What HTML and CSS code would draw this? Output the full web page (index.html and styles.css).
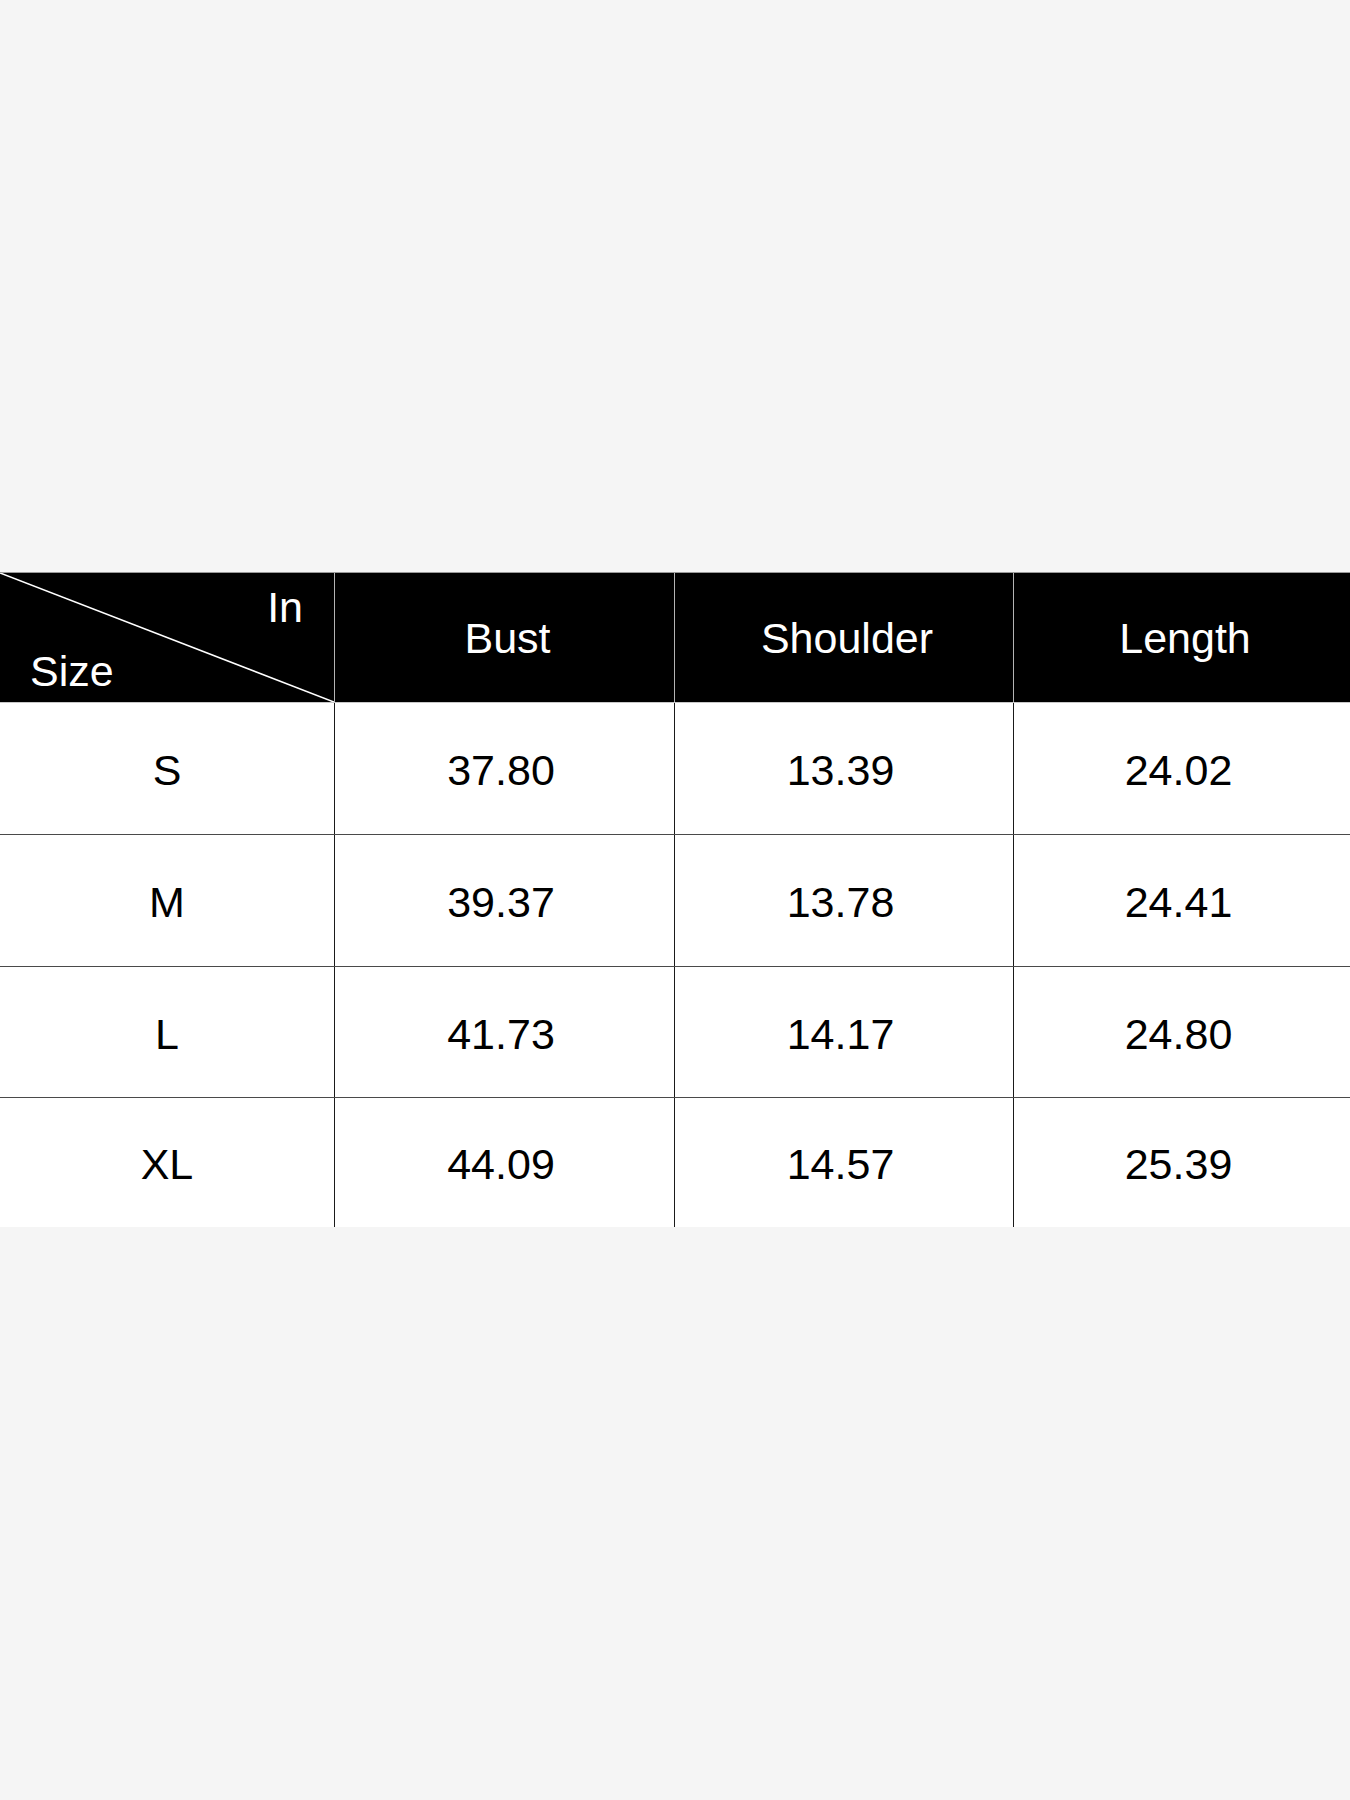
FILE: index.html
```html
<!DOCTYPE html>
<html>
<head>
<meta charset="utf-8">
<link rel="stylesheet" href="styles.css">
</head>
<body>
<div class="page">
  <div class="chart">
    <div class="row head">
      <div class="cell corner">
        <svg class="diag" viewBox="0 0 100 100" preserveAspectRatio="none"><line x1="0" y1="0" x2="100" y2="100" stroke="#fff" stroke-width="1.6" vector-effect="non-scaling-stroke"/></svg>
        <span class="in">In</span>
        <span class="size">Size</span>
      </div>
      <div class="cell">Bust</div>
      <div class="cell">Shoulder</div>
      <div class="cell">Length</div>
    </div>
    <div class="row body">
      <div class="cell">S</div><div class="cell">37.80</div><div class="cell">13.39</div><div class="cell">24.02</div>
    </div>
    <div class="row body">
      <div class="cell">M</div><div class="cell">39.37</div><div class="cell">13.78</div><div class="cell">24.41</div>
    </div>
    <div class="row body">
      <div class="cell">L</div><div class="cell">41.73</div><div class="cell">14.17</div><div class="cell">24.80</div>
    </div>
    <div class="row body">
      <div class="cell">XL</div><div class="cell">44.09</div><div class="cell">14.57</div><div class="cell">25.39</div>
    </div>
  </div>
</div>
</body>
</html>
```
FILE: styles.css
```css
html, body {
  margin: 0;
  padding: 0;
  background: #f5f5f5;
}
.page {
  width: 1350px;
  height: 1800px;
  padding-top: 572px;
  box-sizing: border-box;
  font-family: "Liberation Sans", Arial, sans-serif;
  font-size: 43px;
}
.chart {
  width: 1350px;
}
.row {
  display: grid;
  grid-template-columns: 335px 340px 339px 336px;
}
.cell {
  display: flex;
  align-items: center;
  justify-content: center;
  line-height: 1;
  box-sizing: border-box;
}
.head {
  height: 131px;
  background: #000;
  color: #fff;
  border-top: 1px solid #9a9a9a;
  border-bottom: 1px solid #c8c8c8;
  box-sizing: border-box;
}
.head .cell {
  border-right: 1px solid #b4b4b4;
}
.head .cell:last-child {
  border-right: none;
}
.head .cell:not(.corner) {
  padding-top: 2px;
  padding-left: 6px;
}
.corner {
  position: relative;
  flex-direction: column;
  align-items: stretch;
  justify-content: space-between;
  padding: 13px 31px 9px 30px;
}
.diag {
  position: absolute;
  left: 0;
  top: 0;
  width: 100%;
  height: 100%;
}
.in {
  align-self: flex-end;
  position: relative;
}
.size {
  align-self: flex-start;
  position: relative;
}
.body {
  height: 132px;
  background: #fff;
  color: #000;
  border-bottom: 1px solid #4a4a4a;
  box-sizing: border-box;
}
.body:nth-child(4) {
  height: 131px;
}
.body:last-child {
  height: 129px;
  border-bottom: none;
}
.body .cell {
  border-right: 1px solid #1a1a1a;
  padding-top: 4px;
}
.body .cell + .cell {
  padding-right: 7px;
}
.body .cell:last-child {
  border-right: none;
}
```
